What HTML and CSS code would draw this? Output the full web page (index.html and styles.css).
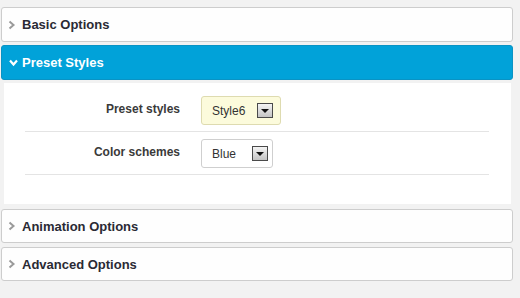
FILE: index.html
```html
<!DOCTYPE html>
<html>
<head>
<meta charset="utf-8">
<link rel="stylesheet" href="styles.css">
</head>
<body>
<div class="accordion">
  <div class="panel">
    <div class="head">
      <svg class="chev" width="8" height="10" viewBox="0 0 8 10"><path d="M1.5 1.5 L5.5 5 L1.5 8.5" fill="none" stroke="#9a9a9a" stroke-width="2"/></svg>
      <span>Basic Options</span>
    </div>
  </div>
  <div class="panel active">
    <div class="head">
      <svg class="chev down" width="9" height="8" viewBox="0 0 9 8"><path d="M1 1.5 L4.5 5.5 L8 1.5" fill="none" stroke="#ffffff" stroke-width="2.2"/></svg>
      <span>Preset Styles</span>
    </div>
  </div>
  <div class="body">
    <div class="row">
      <label class="label">Preset styles</label>
      <div class="select yellow"><span class="val">Style6</span><span class="btn"><i></i></span></div>
    </div>
    <div class="row">
      <label class="label">Color schemes</label>
      <div class="select plain"><span class="val">Blue</span><span class="btn"><i></i></span></div>
    </div>
  </div>
  <div class="panel small">
    <div class="head">
      <svg class="chev" width="8" height="10" viewBox="0 0 8 10"><path d="M1.5 1.5 L5.5 5 L1.5 8.5" fill="none" stroke="#9a9a9a" stroke-width="2"/></svg>
      <span>Animation Options</span>
    </div>
  </div>
  <div class="panel small">
    <div class="head">
      <svg class="chev" width="8" height="10" viewBox="0 0 8 10"><path d="M1.5 1.5 L5.5 5 L1.5 8.5" fill="none" stroke="#9a9a9a" stroke-width="2"/></svg>
      <span>Advanced Options</span>
    </div>
  </div>
</div>
</body>
</html>
```

FILE: styles.css
```css
html, body {
  margin: 0;
  padding: 0;
  background: #f2f2f2;
  font-family: "Liberation Sans", Arial, sans-serif;
}
.accordion {
  padding: 7px 7px 0 1px;
  display: flex;
  flex-direction: column;
}
.panel {
  background: #fefefe;
  border: 1px solid #cdcdcd;
  border-radius: 3px;
  margin-bottom: 3px;
}
.panel.small {
  margin-bottom: 4px;
}
.panel.active {
  background: #01a2d9;
  border-color: #0a93c4;
}
.head {
  display: flex;
  align-items: center;
  height: 33px;
  padding-left: 6px;
  font-size: 13px;
  font-weight: bold;
  color: #2a2a34;
}
.small .head {
  height: 32px;
}
.chev {
  margin-right: 6px;
}
.chev.down {
  margin-left: 1px;
  margin-right: 4px;
}
.active .head {
  color: #ffffff;
}
.body {
  background: #ffffff;
  margin: 0 2px 5px 3px;
  height: 121px;
  padding: 6px 22px 0 21px;
  box-sizing: border-box;
}
.row {
  display: flex;
  align-items: center;
  padding: 7px 0 6px;
  border-bottom: 1px solid #e4e4e4;
}
.label {
  width: 155px;
  text-align: right;
  font-size: 12px;
  font-weight: bold;
  color: #3a3a3a;
  margin-right: 21px;
  margin-top: -3px;
}
.select {
  display: flex;
  align-items: center;
  height: 27px;
  border: 1px solid #cfcfcf;
  border-radius: 3px;
  background: #ffffff;
  padding: 0 7px 0 10px;
  font-size: 12px;
  color: #333333;
}
.select.yellow {
  background: #fcfbdc;
  border-color: #dedbb0;
}
.val {
  margin-right: 12px;
}
.plain {
  padding-right: 4px;
}
.plain .val {
  margin-right: 16px;
}
.btn {
  width: 14px;
  height: 13px;
  border: 1px solid #4a4a4a;
  background: linear-gradient(#f4f4f4, #c4c4c4);
  display: flex;
  align-items: center;
  justify-content: center;
}
.btn i {
  width: 0;
  height: 0;
  border-left: 4px solid transparent;
  border-right: 4px solid transparent;
  border-top: 4px solid #111111;
  margin-top: 1px;
}
```
